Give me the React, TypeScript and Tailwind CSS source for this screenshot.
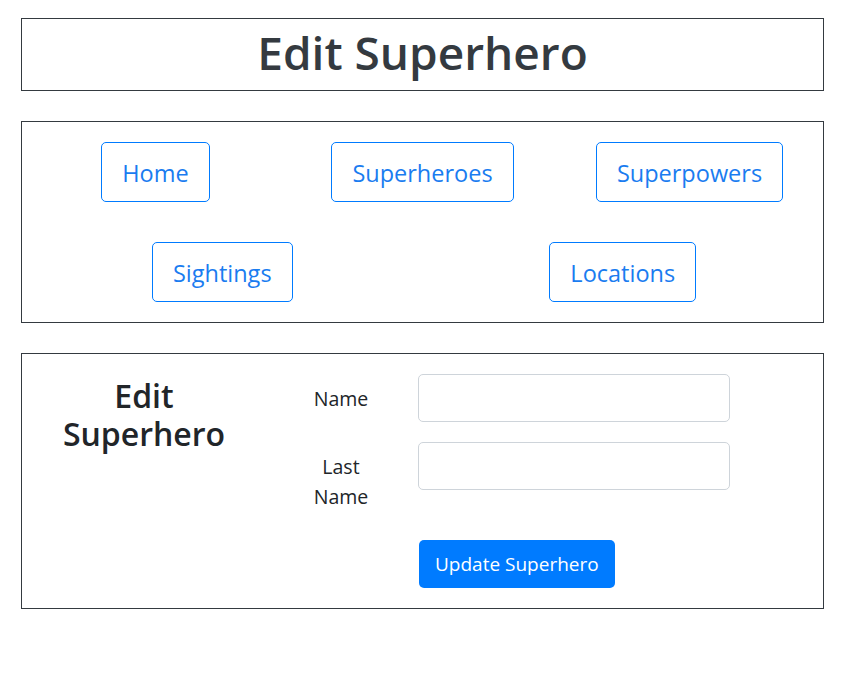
const font = { fontFamily: '"Open Sans", "Noto Sans", sans-serif' };

const navTop = ["Home", "Superheroes", "Superpowers"];
const navBottom = ["Sightings", "Locations"];

function NavButton({ label }: { label: string }) {
  return (
    <a
      href="#"
      className="inline-flex h-[60px] items-center rounded-[5px] border border-[#007bff] px-[20px] pt-[3px] text-[23.5px] text-[#1a7cf0]"
    >
      {label}
    </a>
  );
}

export default function App() {
  return (
    <div className="min-h-[682px] bg-white pt-[18px]" style={font}>
      <div className="ml-[21px] w-[803px]">
        <header className="flex h-[73px] items-center justify-center border border-[#343a40] pb-[3px]">
          <h1 className="text-[46px] leading-[1.2] font-semibold text-[#343a40]">Edit Superhero</h1>
        </header>

        <nav className="mt-[30px] border border-[#343a40] py-[20px]">
          <div className="grid grid-cols-3">
            {navTop.map((item) => (
              <div key={item} className="flex justify-center">
                <NavButton label={item} />
              </div>
            ))}
          </div>
          <div className="mt-[40px] grid grid-cols-2">
            {navBottom.map((item) => (
              <div key={item} className="flex justify-center">
                <NavButton label={item} />
              </div>
            ))}
          </div>
        </nav>

        <section className="mt-[30px] flex border border-[#343a40] py-[20px]">
          <div className="ml-[22px] w-[200px] px-[15px] pt-[3px] text-center">
            <h2 className="text-[32px] leading-[1.2] font-semibold text-[#212529]">Edit Superhero</h2>
          </div>

          <form className="ml-[57px] flex flex-col gap-[20px]">
            <div className="flex items-start">
              <label className="w-[80px] pt-[10px] pb-[8px] text-center text-[19.5px] leading-[30px] text-[#212529]">
                Name
              </label>
              <input
                type="text"
                className="ml-[37px] h-[48px] w-[312px] rounded-[5px] border border-[#ced4da] px-4 text-[20px]"
              />
            </div>
            <div className="flex items-start">
              <label className="w-[80px] pt-[10px] pb-[8px] text-center text-[19.5px] leading-[30px] text-[#212529]">
                Last Name
              </label>
              <input
                type="text"
                className="ml-[37px] h-[48px] w-[312px] rounded-[5px] border border-[#ced4da] px-4 text-[20px]"
              />
            </div>
            <div className="ml-[118px]">
              <button
                type="button"
                className="h-[48px] rounded-[5px] bg-[#007bff] px-4 text-[19px] text-white"
              >
                Update Superhero
              </button>
            </div>
          </form>
        </section>
      </div>
    </div>
  );
}
